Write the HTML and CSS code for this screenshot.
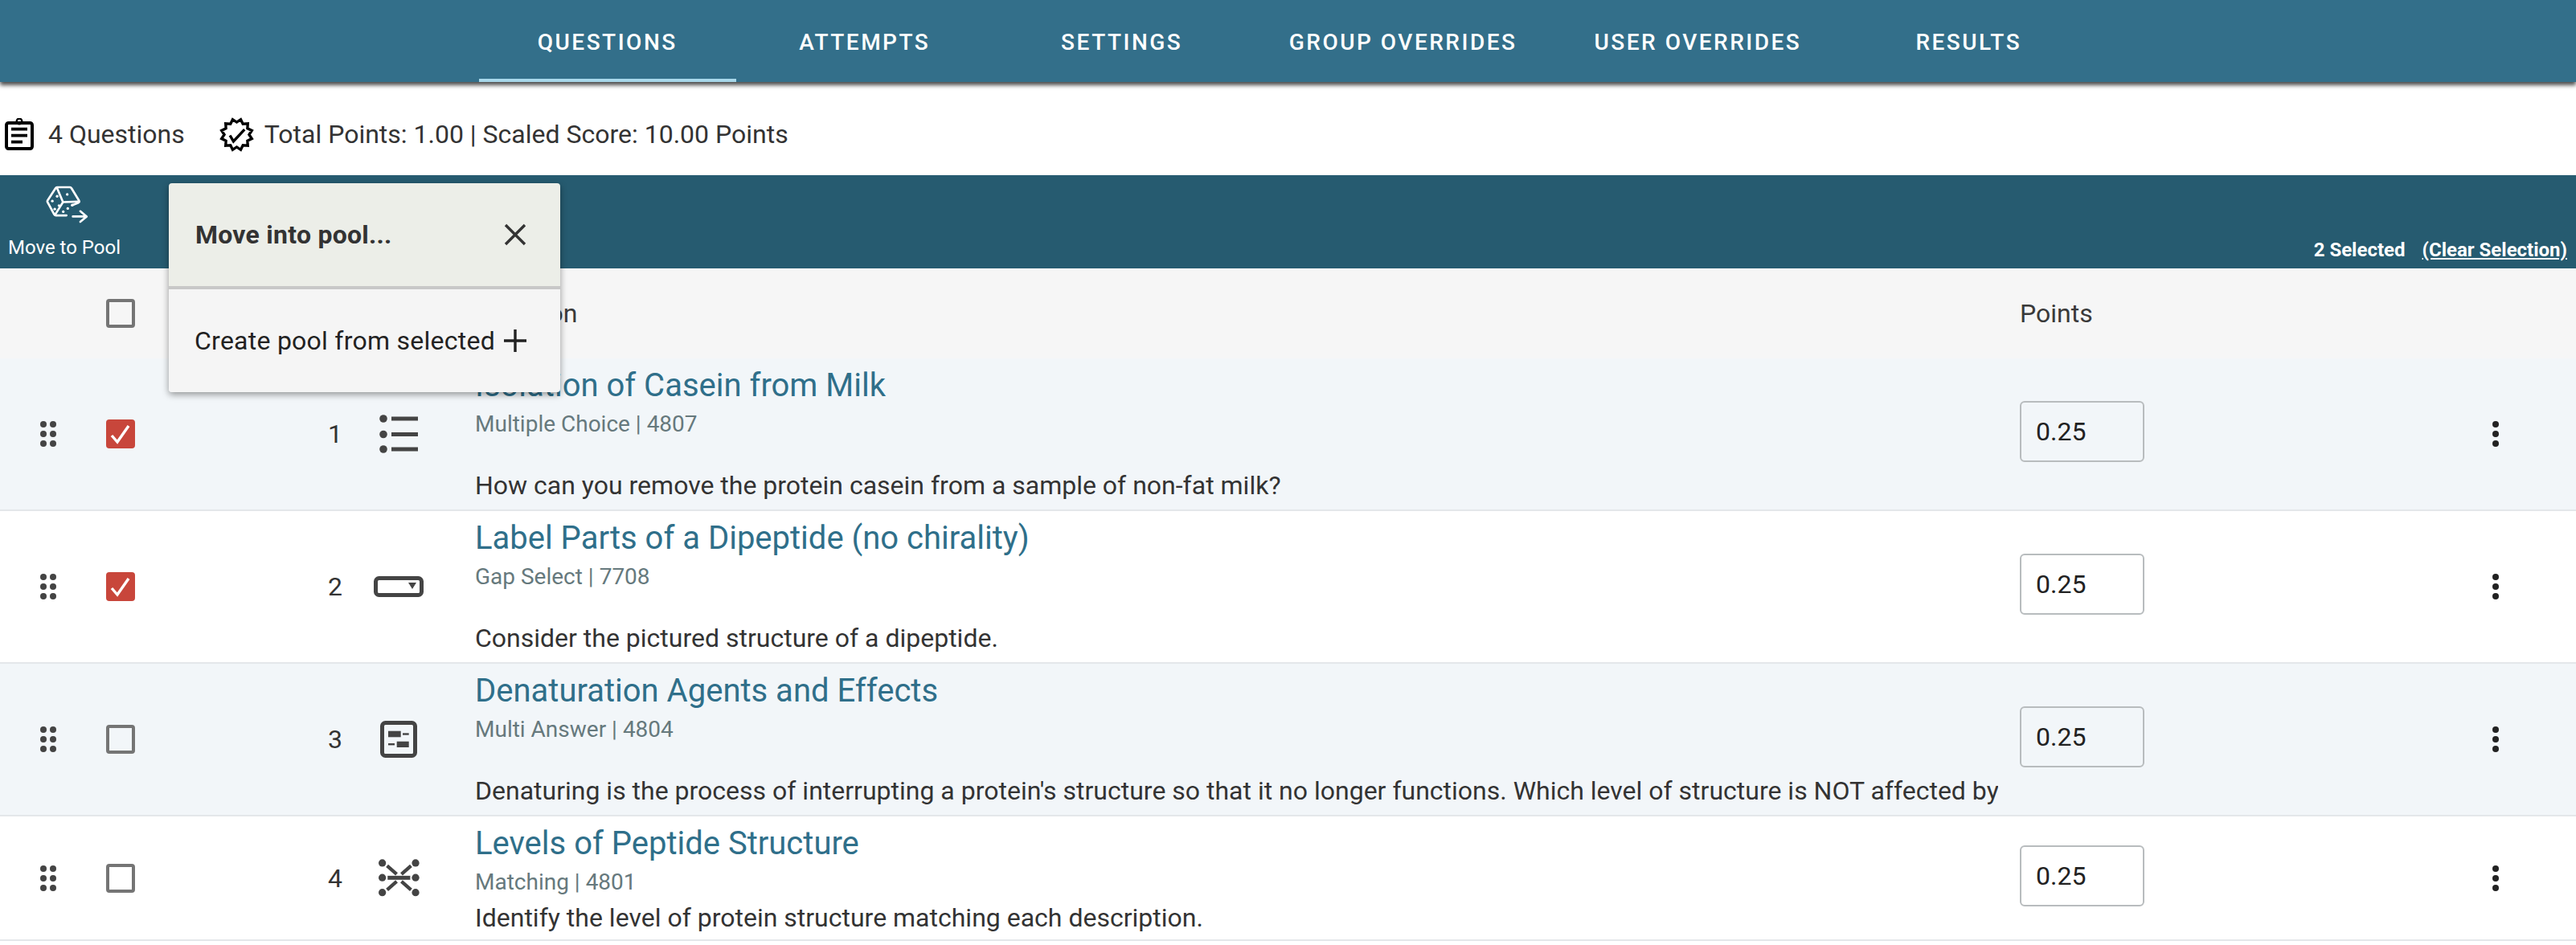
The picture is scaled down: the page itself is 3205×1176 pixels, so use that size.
FILE: index.html
```html
<!DOCTYPE html>
<html lang="en">
<head>
<meta charset="utf-8">
<title>Questions</title>
<link rel="stylesheet" href="styles.css">
</head>
<body>
<nav class="tabs">
  <a class="tab active">QUESTIONS</a>
  <a class="tab">ATTEMPTS</a>
  <a class="tab">SETTINGS</a>
  <a class="tab">GROUP OVERRIDES</a>
  <a class="tab">USER OVERRIDES</a>
  <a class="tab">RESULTS</a>
</nav>
<section class="info">
  <svg class="clip-icon" viewBox="18 32 108 120"><rect x="24" y="50" width="96" height="96" rx="8" fill="none" stroke="#000" stroke-width="12"/><circle cx="72" cy="44" r="10" fill="none" stroke="#000" stroke-width="7"/><path d="M42 73h60M42 97h60M42 121h42" stroke="#000" stroke-width="11" fill="none"/></svg>
  <span class="info-count">4 Questions</span>
  <svg class="badge-icon" viewBox="-64 -64 128 128"><path d="M46 0L56 15L39.800 23L41 41L23 39.800L15 56L0 46L-15 56L-23 39.800L-41 41L-39.800 23L-56 15L-46 0L-56 -15L-39.800 -23L-41 -41L-23 -39.800L-15 -56L0 -46L15 -56L23 -39.800L41 -41L39.800 -23L56 -15Z" fill="none" stroke="#000" stroke-width="10"/><path d="M-25 3L-12 25L29 -19" fill="none" stroke="#000" stroke-width="10"/></svg>
  <span>Total Points: 1.00 | Scaled Score: 10.00 Points</span>
</section>
<section class="toolbar">
  <div class="tool">
    <svg class="dice-icon" viewBox="160 60 165 145"><g fill="none" stroke="#fff" stroke-width="8" stroke-linejoin="round" stroke-linecap="round"><path d="M240 172h-40a8 8 0 0 1-6-4l-25-46a6 6 0 0 1 0-6l30-46a8 8 0 0 1 6-4h48a8 8 0 0 1 6 4l28 46a6 6 0 0 1-2 8l-24 10"/><path d="M205 70l22 52-30 48M227 122l60-2"/><path d="M264 176h50M292 156l24 20-24 20"/></g><g fill="#fff"><circle cx="205" cy="100" r="5"/><circle cx="187" cy="118" r="5"/><circle cx="212" cy="135" r="5"/><circle cx="196" cy="148" r="5"/><circle cx="243" cy="93" r="5"/><circle cx="262" cy="133" r="5"/><circle cx="245" cy="146" r="5"/><circle cx="228" cy="158" r="5"/></g></svg>
    <span class="tool-label">Move to Pool</span>
  </div>
  <div class="selection"><span>2 Selected</span><a class="clear">(Clear Selection)</a></div>
  <div class="popup">
    <div class="popup-head">
      <span>Move into pool...</span>
      <svg class="popup-icon" viewBox="0 0 28 28"><path d="M2 2l24 24M26 2L2 26" stroke="#333" stroke-width="3.400" fill="none"/></svg>
    </div>
    <div class="popup-body">
      <span>Create pool from selected</span>
      <svg class="popup-icon" viewBox="0 0 28 28"><path d="M0 14h28M14 0v28" stroke="#222" stroke-width="3.400" fill="none"/></svg>
    </div>
  </div>
</section>
<section class="table">
  <div class="row head">
    <div></div>
    <div class="cell-center"><span class="check"></span></div>
    <div></div><div></div>
    <div class="head-label">Question</div>
    <div class="head-label">Points</div>
    <div></div>
  </div>

  <article class="row tint">
    <div class="cell-center"><svg class="drag" viewBox="0 0 20 32"><g fill="#444"><circle cx="4" cy="4" r="4"/><circle cx="16" cy="4" r="4"/><circle cx="4" cy="16" r="4"/><circle cx="16" cy="16" r="4"/><circle cx="4" cy="28" r="4"/><circle cx="16" cy="28" r="4"/></g></svg></div>
    <div class="cell-center"><span class="check on"><svg viewBox="0 0 36 36"><path d="M7 20l7 8L28 8" fill="none" stroke="#fff" stroke-width="3.400"/></svg></span></div>
    <div class="num">1</div>
    <div class="type"><svg class="t-list" viewBox="0 0 48 48"><g fill="#444"><circle cx="5" cy="5" r="4.800"/><circle cx="5" cy="24.500" r="4.800"/><circle cx="5" cy="43" r="4.800"/><rect x="15" y="2.500" width="33" height="5"/><rect x="15" y="22" width="33" height="5"/><rect x="15" y="40.500" width="33" height="5"/></g></svg></div>
    <div class="body">
      <a class="title">Isolation of Casein from Milk</a>
      <div class="sub">Multiple Choice | 4807</div>
      <p class="desc">How can you remove the protein casein from a sample of non-fat milk?</p>
    </div>
    <div class="points"><input class="pts" value="0.25"></div>
    <div class="cell-center"><svg class="more" viewBox="0 0 10 32"><g fill="#222"><circle cx="5" cy="4" r="4"/><circle cx="5" cy="16" r="4"/><circle cx="5" cy="28" r="4"/></g></svg></div>
  </article>

  <article class="row">
    <div class="cell-center"><svg class="drag" viewBox="0 0 20 32"><g fill="#444"><circle cx="4" cy="4" r="4"/><circle cx="16" cy="4" r="4"/><circle cx="4" cy="16" r="4"/><circle cx="16" cy="16" r="4"/><circle cx="4" cy="28" r="4"/><circle cx="16" cy="28" r="4"/></g></svg></div>
    <div class="cell-center"><span class="check on"><svg viewBox="0 0 36 36"><path d="M7 20l7 8L28 8" fill="none" stroke="#fff" stroke-width="3.400"/></svg></span></div>
    <div class="num">2</div>
    <div class="type"><svg class="t-gap" viewBox="0 0 62 26"><rect x="2.500" y="2.500" width="57" height="21" rx="4" fill="none" stroke="#444" stroke-width="5"/><path d="M43 8h10l-5 8z" fill="#444"/></svg></div>
    <div class="body">
      <a class="title">Label Parts of a Dipeptide (no chirality)</a>
      <div class="sub">Gap Select | 7708</div>
      <p class="desc">Consider the pictured structure of a dipeptide.</p>
    </div>
    <div class="points"><input class="pts" value="0.25"></div>
    <div class="cell-center"><svg class="more" viewBox="0 0 10 32"><g fill="#222"><circle cx="5" cy="4" r="4"/><circle cx="5" cy="16" r="4"/><circle cx="5" cy="28" r="4"/></g></svg></div>
  </article>

  <article class="row tint">
    <div class="cell-center"><svg class="drag" viewBox="0 0 20 32"><g fill="#444"><circle cx="4" cy="4" r="4"/><circle cx="16" cy="4" r="4"/><circle cx="4" cy="16" r="4"/><circle cx="16" cy="16" r="4"/><circle cx="4" cy="28" r="4"/><circle cx="16" cy="28" r="4"/></g></svg></div>
    <div class="cell-center"><span class="check"></span></div>
    <div class="num">3</div>
    <div class="type"><svg class="t-multi" viewBox="0 0 46 46"><rect x="2.500" y="2.500" width="41" height="41" rx="4" fill="none" stroke="#444" stroke-width="5"/><g fill="#444"><rect x="10" y="12.700" width="15.700" height="7.600"/><rect x="28" y="15.300" width="7.700" height="2.400"/><rect x="10" y="28" width="8" height="2.400"/><rect x="20.700" y="25.700" width="15" height="7.300"/></g></svg></div>
    <div class="body">
      <a class="title">Denaturation Agents and Effects</a>
      <div class="sub">Multi Answer | 4804</div>
      <p class="desc">Denaturing is the process of interrupting a protein's structure so that it no longer functions. Which level of structure is NOT affected by</p>
    </div>
    <div class="points"><input class="pts" value="0.25"></div>
    <div class="cell-center"><svg class="more" viewBox="0 0 10 32"><g fill="#222"><circle cx="5" cy="4" r="4"/><circle cx="5" cy="16" r="4"/><circle cx="5" cy="28" r="4"/></g></svg></div>
  </article>

  <article class="row short">
    <div class="cell-center"><svg class="drag" viewBox="0 0 20 32"><g fill="#444"><circle cx="4" cy="4" r="4"/><circle cx="16" cy="4" r="4"/><circle cx="4" cy="16" r="4"/><circle cx="16" cy="16" r="4"/><circle cx="4" cy="28" r="4"/><circle cx="16" cy="28" r="4"/></g></svg></div>
    <div class="cell-center"><span class="check"></span></div>
    <div class="num">4</div>
    <div class="type"><svg class="t-match" viewBox="58 28 154 140"><g fill="#444"><circle cx="72" cy="42" r="14"/><circle cx="197" cy="42" r="14"/><circle cx="72" cy="97" r="14"/><circle cx="197" cy="97" r="14"/><circle cx="72" cy="153" r="14"/><circle cx="197" cy="153" r="14"/><rect x="92" y="90" width="85" height="15"/></g><path d="M90 52l36 32M180 52l-36 32M90 143l36-32M180 143l-36-32" stroke="#444" stroke-width="13" fill="none"/></svg></div>
    <div class="body">
      <a class="title">Levels of Peptide Structure</a>
      <div class="sub">Matching | 4801</div>
      <p class="desc tight">Identify the level of protein structure matching each description.</p>
    </div>
    <div class="points"><input class="pts" value="0.25"></div>
    <div class="cell-center"><svg class="more" viewBox="0 0 10 32"><g fill="#222"><circle cx="5" cy="4" r="4"/><circle cx="5" cy="16" r="4"/><circle cx="5" cy="28" r="4"/></g></svg></div>
  </article>
</section>
</body>
</html>
```

FILE: styles.css
```css
* { box-sizing: border-box; }
html, body { margin: 0; background: #fff; }
body { font-family: Roboto, "Liberation Sans", sans-serif; color: #333; font-size: 32px; overflow: hidden; }

.tabs { height: 102px; background: #336f8a; display: flex; justify-content: center; box-shadow: 0 4px 5px rgba(0,0,0,.7); position: relative; }
.tab { min-width: 320px; padding: 6px 48px 0; display: flex; align-items: center; justify-content: center; color: #fff; font-size: 28px; font-weight: 500; letter-spacing: 2.500px; border-bottom: 4px solid transparent; }
.tab.active { border-bottom-color: #a8d8ea; }

.info { height: 116px; padding: 14px 0 0 6px; display: flex; align-items: center; font-size: 32px; }
.clip-icon { width: 36px; height: 40px; }
.info-count { margin-left: 18px; margin-right: 43px; }
.badge-icon { width: 43px; height: 43px; margin-right: 13px; }

.toolbar { height: 116px; background: #265b70; position: relative; display: flex; justify-content: space-between; color: #fff; }
.tool { width: 160px; display: flex; flex-direction: column; align-items: center; padding-top: 13px; }
.dice-icon { width: 55px; height: 48px; margin-left: 6px; }
.tool-label { font-size: 24px; margin-top: 14px; line-height: 30px; }
.selection { align-self: flex-end; display: flex; gap: 21px; padding: 0 11px 9px 0; font-size: 24px; font-weight: 700; line-height: 28px; }
.clear { text-decoration: underline; }

.popup { position: absolute; left: 210px; top: 10px; width: 487px; height: 260px; border-radius: 4px; overflow: hidden; box-shadow: 0 3px 8px rgba(0,0,0,.4); color: #222; z-index: 2; letter-spacing: .25px; }
.popup-head { height: 132px; background: #eceee8; border-bottom: 4px solid #c8c8c8; display: flex; align-items: center; justify-content: space-between; padding: 0 42px 0 33px; font-weight: 700; color: #333; }
.popup-body { height: 128px; background: #f5f5f5; display: flex; align-items: center; justify-content: space-between; padding: 0 42px 0 32px; }
.popup-icon { width: 28px; height: 28px; }

.row { display: grid; grid-template-columns: 120px 60px 257px 154px 1922px 537px 110px 1fr; height: 190px; border-bottom: 2px solid #e4e7ea; background: #fff; align-items: center; }
.row.tint { background: #f2f6f9; }
.row.head { height: 112px; background: #f6f6f6; border-bottom: 0; padding-bottom: 1px; }
.row.short { height: 155px; }
.head-label { font-size: 32px; color: #3a3a3a; }
.cell-center { display: flex; align-items: center; justify-content: center; }

.drag { width: 20px; height: 32px; }
.more { width: 10px; height: 32px; }
.check { width: 36px; height: 36px; border: 4px solid #757575; border-radius: 4px; display: block; }
.check.on { border: 0; background: #c8463b; }
.check.on svg { display: block; width: 36px; height: 36px; }

.num { padding-left: 217px; width: 257px; text-align: center; font-size: 32px; }
.type { display: flex; justify-content: center; padding-right: 36px; }
.t-list { width: 48px; height: 48px; }
.t-gap { width: 62px; height: 26px; }
.t-multi { width: 46px; height: 46px; }
.t-match { width: 51px; height: 47px; }

.body { align-self: start; padding-right: 27px; padding-top: 7px; min-width: 0; overflow: hidden; }
.title { display: block; font-size: 40px; line-height: 54px; color: #2f6f8a; white-space: nowrap; }
.sub { font-size: 28px; line-height: 36px; margin-top: 3px; color: #66797d; }
.desc { margin: 38px 0 0; font-size: 32px; line-height: 40px; white-space: nowrap; overflow: hidden; color: #333; }
.desc.tight { margin-top: 6px; }
.points { display: flex; }
.pts { width: 155px; height: 76px; border: 2px solid #b8bcbe; border-radius: 6px; background: transparent; font: 32px Roboto, sans-serif; color: #222; padding: 0 0 0 18px; margin-top: -6px; outline: 0; }
```
